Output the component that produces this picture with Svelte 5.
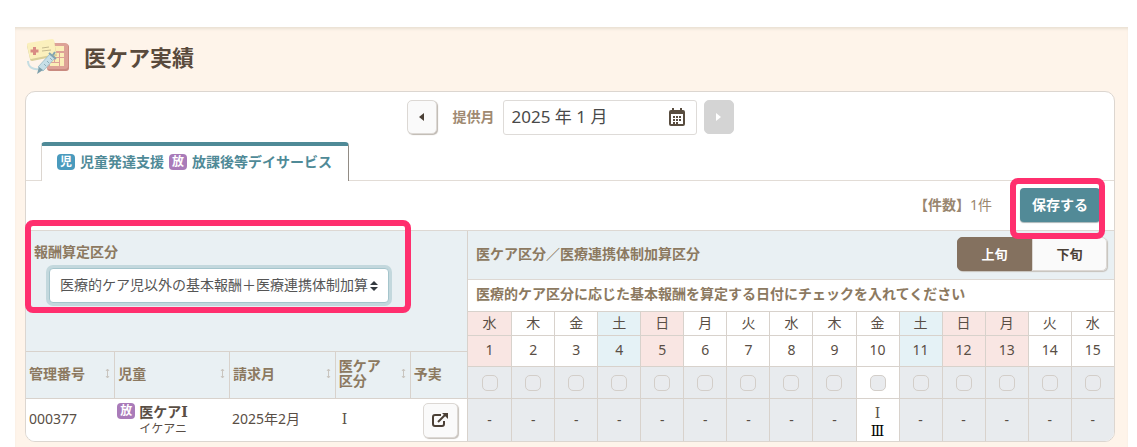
<script>
  const weekdays = ['日', '月', '火', '水', '木', '金', '土'];
  const holidays = [1, 13];
  const columns = ['管理番号', '児童', '請求月', '医ケア区分', '予実'];

  let month = $state('2025 年 1 月');
  let half = $state('first');

  // 2025年1月1日は水曜日
  const days = Array.from({ length: 15 }, (_, i) => {
    const date = i + 1;
    const w = (i + 3) % 7;
    return {
      date,
      label: weekdays[w],
      sat: w === 6,
      off: w === 0 || holidays.includes(date),
      open: date === 10
    };
  });
</script>

<main class="page">
  <header class="title">
    <svg class="logo" viewBox="0 0 44 36" aria-hidden="true">
      <rect x="21" y="5" width="22" height="27" rx="3" fill="#c98a80" />
      <rect x="20" y="4" width="22" height="26" rx="3" fill="#dda297" />
      <rect x="24" y="7" width="14" height="5" fill="#fbeeb8" />
      <g fill="#fbeeb8">
        <rect x="24" y="14" width="4" height="4" /><rect x="29" y="14" width="4" height="4" /><rect x="34" y="14" width="4" height="4" />
        <rect x="24" y="19" width="4" height="4" /><rect x="29" y="19" width="4" height="4" /><rect x="34" y="19" width="4" height="8" />
        <rect x="24" y="24" width="9" height="3" />
      </g>
      <path d="M2 22C2 28 7 31 13 30" fill="none" stroke="#c5dde2" stroke-width="2" />
      <path d="M2 5L27 1Q28 1 28 2L31 17L6 22Q4 22 4 20L1 7Q1 5 2 5Z" fill="#d9cf9a" />
      <path d="M2 4L26 0Q27 0 28 1L30 15L5 20Q4 20 4 19L1 6Q1 4 2 4Z" fill="#fbf0bd" />
      <path d="M8.500 8v8M4.500 12h8" stroke="#d98c84" stroke-width="3" />
      <path d="M16 9l7-1M16 12l9-1" stroke="#c5b98f" />
      <path d="M12 28L24 15L29 19L17 32Z" fill="#c7dfe7" stroke="#a5c3cd" />
      <path d="M18 25l2 2M21 22l2 2M24 19l2 2" stroke="#8fb0bb" />
      <path d="M23 14l7 6M27 16l2-3" stroke="#84a5b0" stroke-width="2" />
      <path d="M13 28l4 3-6 4z" fill="#7d9faa" />
    </svg>
    <h1>医ケア実績</h1>
  </header>

  <section class="card">
    <div class="month">
      <button class="step" aria-label="前の月">
        <svg viewBox="0 0 5 8"><path d="M5 0v8L0 4z" /></svg>
      </button>
      <label for="month">提供月</label>
      <div class="month-box">
        <input id="month" type="text" bind:value={month} />
        <svg viewBox="0 0 16 18" aria-hidden="true">
          <path class="frame" d="M2 3h12q1 0 1 1v12q0 1-1 1H2q-1 0-1-1V4q0-1 1-1z" />
          <path class="fill" d="M1 3h14v3H1zM3 0h2v4H3zM11 0h2v4h-2z" />
          <path class="dots" d="M4 9h8M4 12h8M4 15h5" />
        </svg>
      </div>
      <button class="step off" aria-label="次の月" disabled>
        <svg viewBox="0 0 5 8"><path d="M0 0v8L5 4z" /></svg>
      </button>
    </div>

    <nav class="tabs">
      <a class="tab" href="#service">
        <span class="badge blue">児</span>
        <span>児童発達支援</span>
        <span class="badge purple">放</span>
        <span>放課後等デイサービス</span>
      </a>
    </nav>

    <div class="toolbar">
      <p><b>【件数】</b>1件</p>
      <div class="save-wrap">
        <button class="save">保存する</button>
        <div class="mark save-mark"></div>
      </div>
    </div>

    <div class="sheet">
      <div class="left">
        <div class="filter">
          <label for="kubun">報酬算定区分</label>
          <div class="select-box">
            <select id="kubun">
              <option>医療的ケア児以外の基本報酬＋医療連携体制加算</option>
            </select>
            <svg viewBox="0 0 8 10" aria-hidden="true"><path d="M4 0l4 4H0zM0 6h8L4 10z" /></svg>
          </div>
          <div class="mark filter-mark"></div>
        </div>
        <table class="people">
          <colgroup>
            <col class="c1" /><col class="c2" /><col class="c3" /><col class="c4" /><col class="c5" />
          </colgroup>
          <thead>
            <tr>
              {#each columns as name, i}
                <th>
                  <div class="head">
                    <span class:narrow={i === 3}>{name}</span>
                    {#if i < 4}
                      <svg viewBox="0 0 5 11" aria-hidden="true"><path d="M2.500 1v9M1 3l1.500-2L4 3M1 8l1.500 2L4 8" /></svg>
                    {/if}
                  </div>
                </th>
              {/each}
            </tr>
          </thead>
          <tbody>
            <tr>
              <td>000377</td>
              <td>
                <div class="child">
                  <span class="badge purple">放</span>
                  <div>
                    <b>医ケア<span class="roman">Ⅰ</span></b>
                    <small>イケアニ</small>
                  </div>
                </div>
              </td>
              <td>2025年2月</td>
              <td class="class-cell"><span class="roman">Ⅰ</span></td>
              <td class="link-cell">
                <button class="open" aria-label="予実を開く">
                  <svg viewBox="0 0 16 14">
                    <path d="M9 2H3Q1 2 1 4v7q0 2 2 2h7q2 0 2-2V8" />
                    <path d="M6 9l7-7" />
                    <path class="tip" d="M10 0h6v6z" />
                  </svg>
                </button>
              </td>
            </tr>
          </tbody>
        </table>
      </div>

      <div class="right">
        <div class="right-head">
          <span>医ケア区分／医療連携体制加算区分</span>
          <div class="toggle">
            <button class:on={half === 'first'} onclick={() => (half = 'first')}>上旬</button>
            <button class:on={half === 'last'} onclick={() => (half = 'last')}>下旬</button>
          </div>
        </div>
        <p class="note">医療的ケア区分に応じた基本報酬を算定する日付にチェックを入れてください</p>
        <table class="days">
          <thead>
            <tr class="week">
              {#each days as d}
                <th class:sat={d.sat} class:sun={d.off}>{d.label}</th>
              {/each}
            </tr>
            <tr class="date">
              {#each days as d}
                <th class:sat={d.sat} class:sun={d.off}>{d.date}</th>
              {/each}
            </tr>
          </thead>
          <tbody>
            <tr class="checks">
              {#each days as d}
                <td class:open-day={d.open}>
                  <input type="checkbox" aria-label="{d.date}日" disabled={!d.open} />
                </td>
              {/each}
            </tr>
            <tr class="values">
              {#each days as d}
                <td class:open-day={d.open}>
                  {#if d.open}
                    <div class="grade roman">Ⅰ</div>
                    <div class="grade roman added">Ⅲ</div>
                  {:else}
                    -
                  {/if}
                </td>
              {/each}
            </tr>
          </tbody>
        </table>
      </div>
    </div>
  </section>
</main>

<style>
  :global(body) {
    background: #fff;
    overflow: hidden;
  }

  .page, .page * { box-sizing: border-box; }

  .page {
    margin: 27px 9px 0 15px;
    padding: 0 13px 6px 10px;
    background: #fef4ea;
    box-shadow: inset 0 3px 3px -1px #e9e0d3;
    color: #594e45;
    font-family: "Noto Sans", "Noto Sans CJK JP", sans-serif;
    font-size: 14px;
    line-height: 20px;
  }

  .page button, .page input, .page select { font-family: inherit; }

  .roman { font-family: "DejaVu Serif", serif; }

  h1, p { margin: 0; }

  .title {
    display: flex;
    align-items: center;
    gap: 14px;
    height: 64px;
    padding: 0 0 4px 1px;
  }
  .logo { width: 44px; height: 36px; }
  h1 {
    font-size: 22px;
    line-height: 32px;
    color: #594a3c;
  }

  .card {
    background: #fff;
    border: 1px solid #dcd6d0;
    border-radius: 10px;
  }

  /* 提供月 */
  .month {
    display: flex;
    justify-content: center;
    align-items: center;
    height: 50px;
  }
  .month label {
    margin: 0 8px 0 16px;
    font-weight: 700;
    color: #a08a72;
  }
  .step {
    display: grid;
    place-items: center;
    width: 30px;
    height: 34px;
    padding: 0;
    border: 1px solid #dcd8d4;
    border-radius: 5px;
    background: #fafafa;
    box-shadow: 1px 1px 1px #bdb7b0;
  }
  .step svg { width: 5px; height: 8px; fill: #4b4036; }
  .step.off {
    border-color: #d4d4d4;
    background: #d4d4d4;
    box-shadow: none;
  }
  .step.off svg { fill: #fff; }
  .month-box {
    display: flex;
    align-items: center;
    width: 194px;
    height: 35px;
    margin-right: 7px;
    padding: 0 11px 0 8px;
    border: 1px solid #dedbd8;
    border-radius: 3px;
  }
  .month-box input {
    flex: 1;
    min-width: 0;
    padding: 0;
    border: 0;
    outline: 0;
    background: none;
    font-size: 17px;
    line-height: 24px;
    color: #494949;
  }
  .month-box svg { width: 16px; height: 18px; }
  .frame { fill: none; stroke: #594d3f; stroke-width: 2; }
  .fill { fill: #594d3f; }
  .dots { stroke: #594d3f; stroke-width: 2; stroke-dasharray: 2 1; }

  /* タブ */
  .tabs {
    display: flex;
    height: 39px;
    padding-left: 15px;
    border-bottom: 1px solid #e2dcd6;
  }
  .tab {
    display: flex;
    align-items: center;
    gap: 5px;
    height: 39px;
    padding: 0 16px 4px 15px;
    border: 1px solid #dcd6d0;
    border-top: 4px solid #4f8a97;
    border-right-color: #928c85;
    border-bottom: 0;
    border-radius: 4px 4px 0 0;
    background: #fff;
    color: #4f8a97;
    font-weight: 700;
    text-decoration: none;
  }
  .badge {
    flex: none;
    width: 18px;
    height: 16px;
    border-radius: 4px;
    color: #fff;
    font-size: 12px;
    font-weight: 700;
    line-height: 15px;
    text-align: center;
  }
  .blue { background: #4a9abd; }
  .purple { background: #a97bb9; }

  .toolbar {
    display: flex;
    justify-content: flex-end;
    align-items: center;
    gap: 28px;
    height: 49px;
    padding: 0 14px 2px 0;
    color: #99866f;
  }
  .save-wrap { position: relative; }
  .save {
    display: block;
    height: 34px;
    padding: 0 12px 2px;
    border: 0;
    border-radius: 4px;
    background: #528a97;
    box-shadow: 0 1px 1px #a9b5b7;
    color: #fff;
    font-size: 14px;
    font-weight: 700;
  }

  .mark {
    position: absolute;
    z-index: 2;
    border: 6px solid #ff2f6e;
    border-radius: 8px;
    pointer-events: none;
  }
  .save-mark { inset: -10px -5px -17px -10px; }
  .filter-mark { inset: -11px 56px 38px -1px; }

  /* 表 */
  .sheet {
    display: grid;
    grid-template-columns: minmax(0, 15fr) minmax(0, 22fr);
    border-top: 1px solid #ddd8d3;
  }
  .left {
    display: flex;
    flex-direction: column;
    background: #e9f0f3;
    border-radius: 0 0 0 9px;
  }
  .filter {
    position: relative;
    flex: 1;
    padding: 11px 8px 0;
  }
  .filter label {
    display: block;
    font-weight: 700;
    color: #8c7960;
  }
  .select-box {
    position: relative;
    width: 340px;
    max-width: 100%;
    margin: 6px 0 0 15px;
  }
  .select-box select {
    display: block;
    width: 100%;
    height: 35px;
    padding: 0 20px 2px 10px;
    border: 1px solid #a5c5cc;
    border-radius: 4px;
    background: #fff;
    box-shadow: 0 0 0 3px #c3d8dd;
    color: #555;
    font-size: 14px;
    appearance: none;
  }
  .select-box svg {
    position: absolute;
    top: 13px;
    right: 11px;
    width: 8px;
    height: 10px;
    fill: #343a40;
    pointer-events: none;
  }

  table {
    width: 100%;
    table-layout: fixed;
    border-spacing: 0;
  }
  th, td { padding: 0; }

  .c1 { width: 20%; }
  .c2 { width: 26%; }
  .c3 { width: 24%; }
  .c4 { width: 17%; }
  .c5 { width: 13%; }
  .people th {
    height: 48px;
    padding: 0 4px 4px 3px;
    border-top: 1px solid #d8d2cc;
    border-bottom: 1px solid #d8d2cc;
    border-left: 1px solid #d8d2cc;
    color: #8c7960;
    text-align: left;
    line-height: 15px;
  }
  .people th:first-child { border-left: 0; }
  .head {
    display: flex;
    align-items: center;
    justify-content: space-between;
  }
  .head svg {
    width: 5px;
    height: 11px;
    fill: none;
    stroke: #c9c5bf;
  }
  .narrow { width: 44px; }
  .people td {
    height: 42px;
    padding: 0 3px 2px;
    background: #fff;
  }
  .people td:first-child { border-radius: 0 0 0 9px; }
  .child {
    display: flex;
    gap: 4px;
    line-height: 17px;
  }
  .child b, .child small { display: block; }
  .child small { font-size: 12px; line-height: 15px; }
  .people .class-cell { padding-left: 7px; }
  .people .link-cell { padding: 0 0 0 13px; }
  .open {
    display: grid;
    place-items: center;
    width: 35px;
    height: 35px;
    padding: 0;
    border: 1px solid #dcd8d4;
    border-radius: 5px;
    background: #fafafa;
    box-shadow: 1px 1px 1px #c6c1bb;
  }
  .open svg { width: 16px; height: 14px; fill: none; stroke: #4b4036; stroke-width: 2; }
  .open .tip { fill: #4b4036; stroke: none; }

  .right { border-left: 1px solid #d8d2cc; }
  .right-head {
    display: flex;
    align-items: center;
    justify-content: space-between;
    height: 49px;
    padding: 0 7px 2px 8px;
    border-bottom: 1px solid #ddd8d3;
    background: #e9f0f3;
    color: #8c7960;
    font-weight: 700;
  }
  .toggle {
    display: flex;
    border-radius: 5px;
    box-shadow: 1px 1px 1px #c6c1bb;
  }
  .toggle button {
    width: 75px;
    height: 34px;
    padding: 0 0 2px;
    border: 1px solid #dcd8d4;
    background: #fafafa;
    color: #4b4036;
    font-size: 13px;
    font-weight: 700;
  }
  .toggle button:first-child { border-radius: 5px 0 0 5px; }
  .toggle button:last-child { border-radius: 0 5px 5px 0; }
  .toggle .on {
    border-color: #84715f;
    background: #84715f;
    color: #fff;
  }
  .note {
    height: 31px;
    padding: 0 8px;
    color: #8c7960;
    font-weight: 700;
    line-height: 28px;
    white-space: nowrap;
  }

  .days th, .days td {
    border-top: 1px solid #d8d2cc;
    border-left: 1px solid #d8d2cc;
    text-align: center;
    font-weight: 400;
  }
  .days th:first-child, .days td:first-child { border-left: 0; }
  .week th { height: 24px; padding-bottom: 2px; }
  .date th { height: 31px; padding-bottom: 2px; }
  .checks td { height: 32px; background: #e8ebee; }
  .values td { height: 43px; background: #e8ebee; }
  .values td:last-child { border-radius: 0 0 9px 0; }
  .sat { background: #e5f2f6; }
  .sun { background: #f9e6e3; }
  .days .open-day { background: #fff; }
  .checks input {
    display: block;
    width: 16px;
    height: 16px;
    margin: 0 auto;
    border: 1px solid #d3cec9;
    border-radius: 5px;
    background: #e9ebee;
    appearance: none;
  }
  .grade { line-height: 18px; }
  .added {
    width: 25px;
    margin: 0 auto -4px;
    background: #fff;
    color: #000;
  }
</style>
